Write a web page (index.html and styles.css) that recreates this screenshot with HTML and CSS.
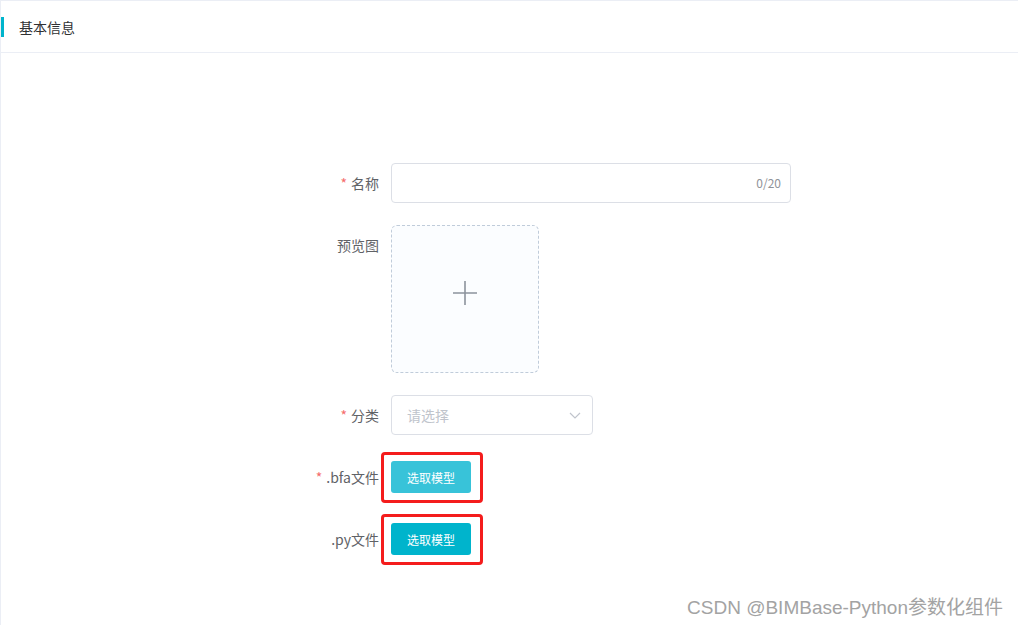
FILE: index.html
```html
<!DOCTYPE html>
<html lang="zh-CN">
  <head>
    <meta charset="UTF-8" />
    <meta name="viewport" content="width=device-width, initial-scale=1.0" />
    <title>基本信息</title>
    <link rel="stylesheet" href="styles.css">
  </head>
  <body>
    <div class="page">
      <div class="header">
        <span class="title">基本信息</span>
      </div>

      <form class="form">
        <div class="form-item">
          <label class="label"><span class="required">*</span>名称</label>
          <div class="input-box">
            <input class="input" type="text" />
            <span class="count">0/20</span>
          </div>
        </div>

        <div class="form-item">
          <label class="label">预览图</label>
          <div class="upload">
            <svg class="plus" width="24" height="24" viewBox="0 0 24 24">
              <path d="M12 0V24M0 12H24" stroke="#8c939d" stroke-width="1.6" fill="none" />
            </svg>
          </div>
        </div>

        <div class="form-item">
          <label class="label"><span class="required">*</span>分类</label>
          <div class="select">
            <span class="placeholder">请选择</span>
            <svg width="12" height="12" viewBox="0 0 12 12">
              <path d="M1 4L6 9L11 4" stroke="#c0c4cc" stroke-width="1.2" fill="none" />
            </svg>
          </div>
        </div>

        <div class="form-item">
          <label class="label"><span class="required">*</span>.bfa文件</label>
          <div class="btn-wrap">
            <button type="button" class="btn btn-hover">选取模型</button>
          </div>
        </div>

        <div class="form-item">
          <label class="label">.py文件</label>
          <div class="btn-wrap">
            <button type="button" class="btn">选取模型</button>
          </div>
        </div>
      </form>

      <div class="watermark">CSDN @BIMBase-Python参数化组件</div>
    </div>
  </body>
</html>
```

FILE: styles.css
```css
* {
  margin: 0;
  padding: 0;
  box-sizing: border-box;
}
body {
  font-family: "Noto Sans CJK SC", "Noto Sans", sans-serif;
  font-size: 14px;
  color: #606266;
  background-color: #fff;
}
.page {
  position: relative;
  height: 625px;
  border-top: 1px solid #ebeef5;
  border-left: 1px solid #ebeef5;
}
.header {
  height: 52px;
  display: flex;
  align-items: center;
  border-bottom: 1px solid #ebeef5;
}
.title {
  border-left: 3px solid #00b4cc;
  padding-left: 15px;
  line-height: 20px;
  font-size: 14px;
  color: #303133;
}
.form {
  padding-top: 110px;
  margin-left: 290px;
}
.form-item {
  display: flex;
  margin-bottom: 22px;
}
.label {
  width: 100px;
  padding-right: 12px;
  text-align: right;
  line-height: 40px;
  color: #606266;
}
.required {
  color: #f56c6c;
  margin-right: 4px;
}
.input-box {
  position: relative;
  width: 400px;
  height: 40px;
}
.input {
  width: 100%;
  height: 100%;
  border: 1px solid #dcdfe6;
  border-radius: 4px;
  padding: 0 50px 0 15px;
  outline: none;
  font-family: inherit;
  font-size: 14px;
}
.count {
  position: absolute;
  right: 10px;
  top: 0;
  line-height: 40px;
  font-size: 12px;
  color: #909399;
}
.upload {
  width: 148px;
  height: 148px;
  border: 1px dashed #c0ccda;
  border-radius: 6px;
  background-color: #fbfdff;
  display: flex;
  align-items: center;
  justify-content: center;
}
.plus {
  margin-bottom: 12px;
}
.select {
  width: 202px;
  height: 40px;
  border: 1px solid #dcdfe6;
  border-radius: 4px;
  padding: 0 11px 0 15px;
  display: flex;
  align-items: center;
  justify-content: space-between;
}
.placeholder {
  color: #c0c4cc;
}
.btn-wrap {
  position: relative;
  height: 40px;
  display: flex;
  align-items: center;
}
.btn-wrap::after {
  content: "";
  position: absolute;
  left: -10px;
  right: -12px;
  top: -5px;
  bottom: -6px;
  border: 3px solid #f41c1c;
  border-radius: 4px;
}
.btn {
  width: 80px;
  height: 32px;
  border: none;
  border-radius: 3px;
  background-color: #00b4cc;
  color: #fff;
  font-family: inherit;
  font-size: 12px;
}
.btn-hover {
  background-color: #38c3d9;
}
.watermark {
  position: absolute;
  right: 15px;
  bottom: 6px;
  font-family: "Liberation Sans", "Noto Sans CJK SC", sans-serif;
  font-size: 19px;
  color: #a3a3a3;
}
```
